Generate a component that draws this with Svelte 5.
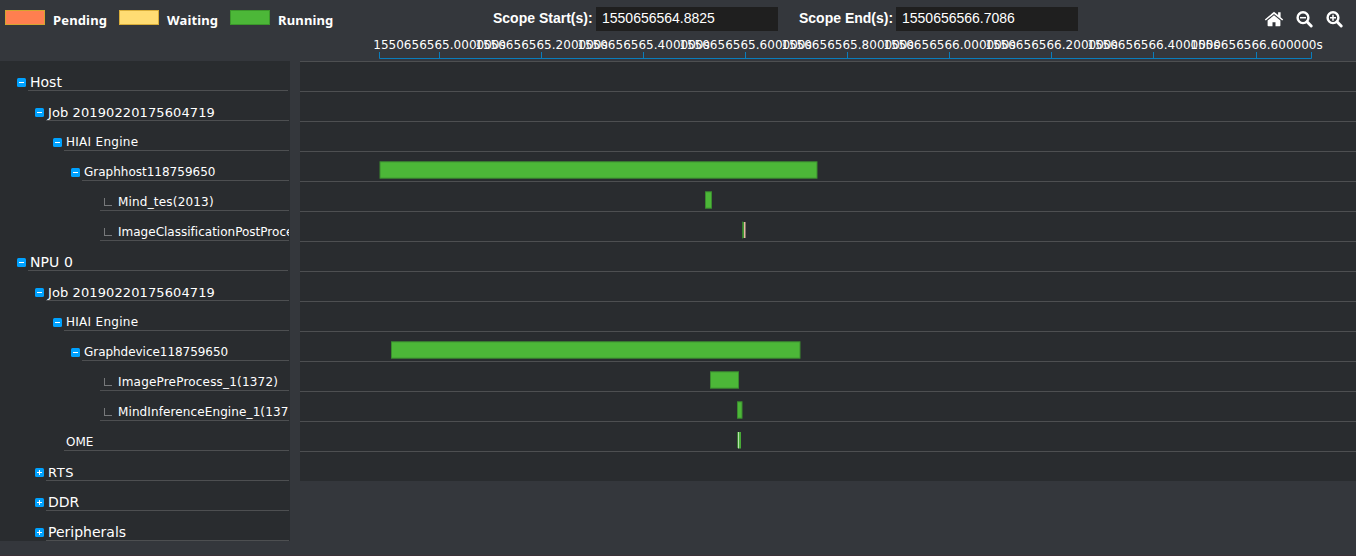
<script>
  const legend = [
    { name: 'Pending', fill: '#ff7f50', edge: '#d4a52f', width: 114 },
    { name: 'Waiting', fill: '#ffdc73', edge: '#d9ae3a', width: 111 },
    { name: 'Running', fill: '#4cb738', edge: '#3b982b', width: 110 }
  ];

  // level: tree depth, size: label font size, mark: toggle state
  const rows = [
    { text: 'Host', level: 0, size: 14, mark: 'minus' },
    { text: 'Job 20190220175604719', level: 1, size: 13, mark: 'minus', track: 0.1 },
    { text: 'HIAI Engine', level: 2, size: 12, mark: 'minus', track: 0.28 },
    { text: 'Graphhost118759650', level: 3, size: 12, mark: 'minus' },
    { text: 'Mind_tes(2013)', level: 4, size: 12, mark: 'leaf', track: 0.19 },
    { text: 'ImageClassificationPostProcess', level: 4, size: 12, mark: 'leaf', track: 0.01 },
    { text: 'NPU 0', level: 0, size: 14, mark: 'minus', track: 0.1 },
    { text: 'Job 20190220175604719', level: 1, size: 13, mark: 'minus', track: 0.1 },
    { text: 'HIAI Engine', level: 2, size: 12, mark: 'minus', track: 0.28 },
    { text: 'Graphdevice118759650', level: 3, size: 12, mark: 'minus', track: -0.04 },
    { text: 'ImagePreProcess_1(1372)', level: 4, size: 12, mark: 'leaf', track: 0.19 },
    { text: 'MindInferenceEngine_1(1372)', level: 4, size: 12, mark: 'leaf', track: 0.11 },
    { text: 'OME', level: 2, size: 12, mark: 'none' },
    { text: 'RTS', level: 1, size: 13, mark: 'plus', track: 0.6 },
    { text: 'DDR', level: 1, size: 14, mark: 'plus' },
    { text: 'Peripherals', level: 1, size: 14, mark: 'plus' }
  ];

  const ticks = [439, 541, 643, 745, 847, 949, 1051, 1153, 1256].map((x, i) => ({
    x,
    label: (1550656565 + i * 0.2).toFixed(1) + '00000s'
  }));

  const bars = [
    { row: 3, x: 80, w: 437 },
    { row: 4, x: 405.5, w: 6 },
    { row: 9, x: 91.5, w: 408.5 },
    { row: 10, x: 410.5, w: 28 },
    { row: 11, x: 437.5, w: 4.5 }
  ];
</script>

<div class="page">
  <header>
    <div class="legend">
      {#each legend as l}
        <div class="key" style="width:{l.width}px">
          <i style="background:{l.fill};border-color:{l.edge}"></i><b>{l.name}</b>
        </div>
      {/each}
    </div>
    <div class="scope">
      <label for="start">Scope Start(s):</label>
      <input id="start" value="1550656564.8825" />
      <label class="end" for="end">Scope End(s):</label>
      <input id="end" value="1550656566.7086" />
    </div>
    <div class="tools">
      <svg class="home" width="20" height="17" viewBox="0 0 20 17">
        <path d="M10 4.300 3.600 9.600V14.400q0 .8.8.8h4.100v-4h3v4h4.100q.8 0 .8-.8V9.600z" />
        <path d="M10 .8 .8 8.400l1 1.200L10 2.900 18.200 9.600l1-1.200L16.600 6.200V1.300h-2.500v2.800z" />
      </svg>
      {#each [false, true] as zoomIn}
        <svg width="18" height="18" viewBox="0 0 18 18">
          <circle cx="7" cy="6.700" r="5.400" fill="none" stroke="#fff" stroke-width="2.400" />
          <path d="M11 10.800 15.200 15" stroke="#fff" stroke-width="3" stroke-linecap="round" />
          <path d={zoomIn ? 'M4 6.700h6M7 3.700v6' : 'M4 6.700h6'} stroke="#fff" stroke-width="1.500" />
        </svg>
      {/each}
    </div>
  </header>

  <svg class="axis" width="1356" height="25" viewBox="0 36 1356 25">
    <path d="M379.500 52V58.500H1311.500V52" />
    {#each ticks as t}
      <path d="M{t.x + 0.5} 52V58" />
      <text x={t.x + 0.5} y="49" textLength="132.5">{t.label}</text>
    {/each}
  </svg>

  <main>
    <div class="tree">
      {#each rows as r}
        <div class="row l{r.level}">
          {#if r.mark === 'leaf'}
            <span class="elbow"></span>
          {:else if r.mark !== 'none'}
            <svg class="toggle" width="9" height="9" viewBox="0 0 9 9">
              <rect width="9" height="9" rx="1.500" fill="#00a2ff" />
              <path d={r.mark === 'plus' ? 'M2 4.500h5M4.500 2v5' : 'M2 4.500h5'} stroke="#fff" />
            </svg>
          {/if}
          <span class="name s{r.size}" style="letter-spacing:{r.track ?? 0}px">{r.text}</span>
        </div>
      {/each}
    </div>

    <div class="chart">
      <svg width="1056" height="420" viewBox="0 0 1056 420">
        {#each Array(14) as _, i}
          <path class="grid" d="M0 {i * 30 + 0.5}H1056" />
        {/each}
        {#each bars as b}
          <rect class="bar" x={b.x} y={b.row * 30 + 10.800} width={b.w} height="16.400" />
        {/each}
        <path d="M442.500 160.500v17" stroke="#397c30" />
        <path d="M443.500 161v16" stroke="#3f9634" />
        <path d="M444.500 161v16" stroke="#eab5a6" />
        <path d="M445.500 161v16" stroke="#80756a" />
        <path d="M437.500 371v16" stroke="#397c30" />
        <path d="M438.500 371v16.500" stroke="#b7dfb0" />
        <path d="M440 371v16.500" stroke="#47a936" stroke-width="2" />
      </svg>
    </div>
  </main>
</div>

<style>
  :global(body) {
    background: #34373c;
    overflow: hidden;
  }
  .page {
    box-sizing: border-box;
    width: 1356px;
    height: 556px;
    color: #fff;
    background: #34373c;
    border-bottom: 1px solid #3b3137;
    font-family: 'DejaVu Sans', sans-serif;
    overflow: hidden;
  }
  header {
    display: flex;
    height: 36px;
    font: bold 14px 'Liberation Sans', sans-serif;
  }
  .legend {
    display: flex;
    width: 488px;
    padding-left: 5px;
  }
  .key {
    display: flex;
    gap: 8px;
  }
  .key i {
    box-sizing: border-box;
    width: 40px;
    height: 15px;
    margin-top: 10px;
    border: 1px solid;
  }
  .key b {
    font: bold 13px/18px 'Noto Sans', sans-serif;
    letter-spacing: 0.15px;
    margin-top: 11px;
  }
  .scope {
    display: flex;
    align-items: center;
    width: 771px;
  }
  .scope label {
    width: 103px;
  }
  .scope .end {
    width: 97px;
    margin-left: 21px;
  }
  input {
    box-sizing: border-box;
    width: 182px;
    height: 24px;
    margin-top: 2px;
    padding: 0 6px 2px;
    border: 0;
    background: #1f1f1f;
    color: #fff;
    font: 14px 'Liberation Sans', sans-serif;
  }
  .tools {
    display: flex;
    gap: 12.5px;
    padding-top: 11px;
    fill: #fff;
  }
  .home {
    margin-right: -1px;
  }
  .axis {
    display: block;
  }
  .axis path {
    fill: none;
    stroke: #0a7dbc;
  }
  .axis text {
    fill: #fff;
    font-size: 12px;
    text-anchor: middle;
  }
  main {
    display: flex;
    gap: 10px;
    align-items: flex-start;
  }
  .tree {
    width: 290px;
    background: #292c2f;
  }
  .row {
    box-sizing: border-box;
    display: flex;
    height: 30px;
    width: 289px;
    overflow: hidden;
  }
  .l0 { padding-left: 28px; width: 288px; }
  .l1 { padding-left: 46px; }
  .l2 { padding-left: 64px; }
  .l3 { padding-left: 82px; }
  .l4 { padding-left: 100px; }
  .toggle {
    flex: none;
    margin: 17px 2px 0 -11px;
  }
  .elbow {
    box-sizing: border-box;
    flex: none;
    width: 8px;
    height: 8px;
    margin: 17px -12px 0 4px;
    border: solid #77797b;
    border-width: 0 0 1px 1px;
  }
  .name {
    box-sizing: border-box;
    flex: 1;
    min-width: 0;
    height: 30px;
    padding: 12px 0 0 2px;
    border-bottom: 1px solid #4d4f51;
    line-height: 18px;
    white-space: nowrap;
  }
  .l4 .name { padding-left: 18px; }
  .s12 { font-size: 12px; }
  .s13 { font-size: 13px; padding-top: 13px; line-height: 17px; }
  .s14 { font-size: 14px; }
  .chart {
    background: #292c2f;
    height: 420px;
  }
  .chart svg {
    display: block;
  }
  .grid {
    stroke: #4d4f51;
  }
  .bar {
    fill: #4cb738;
    stroke: #3a8b2f;
  }
</style>
